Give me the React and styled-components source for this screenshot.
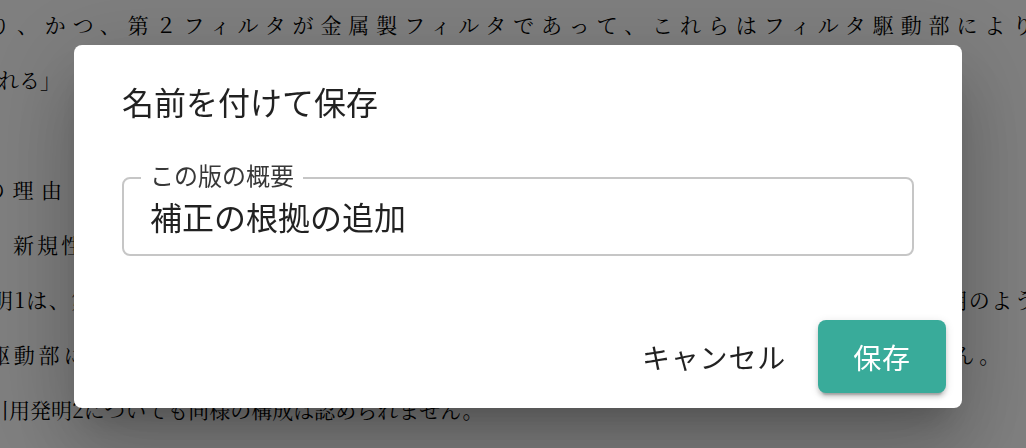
import React from "react";
import styled, { createGlobalStyle } from "styled-components";

const lines = [
  { text: "り、かつ、第２フィルタが金属製フィルタであって、これらはフィルタ駆動部により駆動される", indent: -11, spacing: 6.9 },
  { text: "れる」", indent: -2, spacing: 0 },
  { text: "", indent: 0, spacing: 0 },
  { text: "拒絶の理由", indent: -73, spacing: 7.5 },
  { text: "　新規性（特許法第２９条第１項）について", indent: -11, spacing: 3 },
  { text: "明1は、第１フィルタ及び第２フィルタを備えるものの、金属製フィルタの記載はなく、本願発明のような構成", indent: -8, spacing: 1.65 },
  { text: "駆動部により両フィルタを移動させる構成の記載はなく、当該構成は開示されていません。", indent: -11, spacing: 3.8 },
  { text: "引用発明2についても同様の構成は認められません。", indent: -12, spacing: 0 },
];

function App() {
  return (
    <>
      <GlobalStyle />
      <Paper>
        {lines.map((line, i) => (
          <Line key={i} $indent={line.indent} $spacing={line.spacing}>
            {line.text}
          </Line>
        ))}
      </Paper>
      <Backdrop>
        <Dialog role="dialog" aria-labelledby="save-as-title">
          <DialogTitle id="save-as-title">名前を付けて保存</DialogTitle>
          <DialogContent>
            <OutlinedField>
              <FieldLabel>この版の概要</FieldLabel>
              <FieldInput defaultValue="補正の根拠の追加" />
            </OutlinedField>
          </DialogContent>
          <DialogActions>
            <TextButton>キャンセル</TextButton>
            <ContainedButton>保存</ContainedButton>
          </DialogActions>
        </Dialog>
      </Backdrop>
    </>
  );
}

export default App;

const uiFont = `"Noto Sans CJK JP", "Noto Sans", Roboto, sans-serif`;

const GlobalStyle = createGlobalStyle`
  html, body {
    margin: 0;
    padding: 0;
    background: #fff;
    overflow: hidden;
  }
  * {
    box-sizing: border-box;
  }
`;

const Paper = styled.div`
  width: 1026px;
  height: 448px;
  overflow: hidden;
  margin-top: -3px;
  font-family: "Noto Serif CJK JP", "Noto Sans CJK JP", serif;
  font-size: 21px;
  color: #000;
`;

const Line = styled.div`
  height: 55px;
  line-height: 55px;
  white-space: nowrap;
  margin-left: ${(p) => p.$indent}px;
  letter-spacing: ${(p) => p.$spacing}px;
`;

const Backdrop = styled.div`
  position: fixed;
  inset: 0;
  background-color: rgba(0, 0, 0, 0.5);
  display: flex;
  align-items: flex-start;
  justify-content: flex-start;
  padding: 45px 0 0 74px;
`;

const Dialog = styled.div`
  width: 888px;
  background: #fff;
  border-radius: 8px;
  display: flex;
  flex-direction: column;
  font-family: ${uiFont};
  color: rgba(0, 0, 0, 0.87);
  box-shadow: 0 22px 30px -14px rgba(0, 0, 0, 0.2),
    0 48px 76px 6px rgba(0, 0, 0, 0.14), 0 18px 92px 16px rgba(0, 0, 0, 0.12);
`;

const DialogTitle = styled.h2`
  margin: 0;
  padding: 32px 48px;
  font-size: 32px;
  line-height: 48px;
  font-weight: 400;
`;

const DialogContent = styled.div`
  padding: 6px 48px 48px;
`;

const OutlinedField = styled.fieldset`
  margin: 0;
  padding: 0 26px 15px;
  border: 2px solid #c6c6c6;
  border-radius: 8px;
  display: flex;
  flex-direction: column;
`;

const FieldLabel = styled.legend`
  margin-left: -9px;
  padding: 0 9px 6px;
  font-size: 24px;
  line-height: 24px;
  color: #383838;
`;

const FieldInput = styled.input`
  height: 46px;
  padding: 0;
  border: none;
  outline: none;
  background: transparent;
  font-family: ${uiFont};
  font-size: 32px;
  line-height: 46px;
  color: rgba(0, 0, 0, 0.87);
`;

const DialogActions = styled.div`
  display: flex;
  justify-content: flex-end;
  align-items: center;
  gap: 16px;
  padding: 16px 16px 15px;
`;

const BaseButton = styled.button`
  height: 73px;
  min-width: 128px;
  border: none;
  border-radius: 8px;
  font-family: ${uiFont};
  font-size: 28px;
  font-weight: 400;
  letter-spacing: 0.8px;
  line-height: 1;
  cursor: pointer;
`;

const TextButton = styled(BaseButton)`
  padding: 0 16px;
  background: transparent;
  color: rgba(0, 0, 0, 0.87);
`;

const ContainedButton = styled(BaseButton)`
  padding: 0 32px;
  background: #39ab9a;
  color: #fff;
  box-shadow: 0 6px 2px -4px rgba(0, 0, 0, 0.2), 0 4px 4px 0 rgba(0, 0, 0, 0.14),
    0 2px 10px 0 rgba(0, 0, 0, 0.12);
`;
